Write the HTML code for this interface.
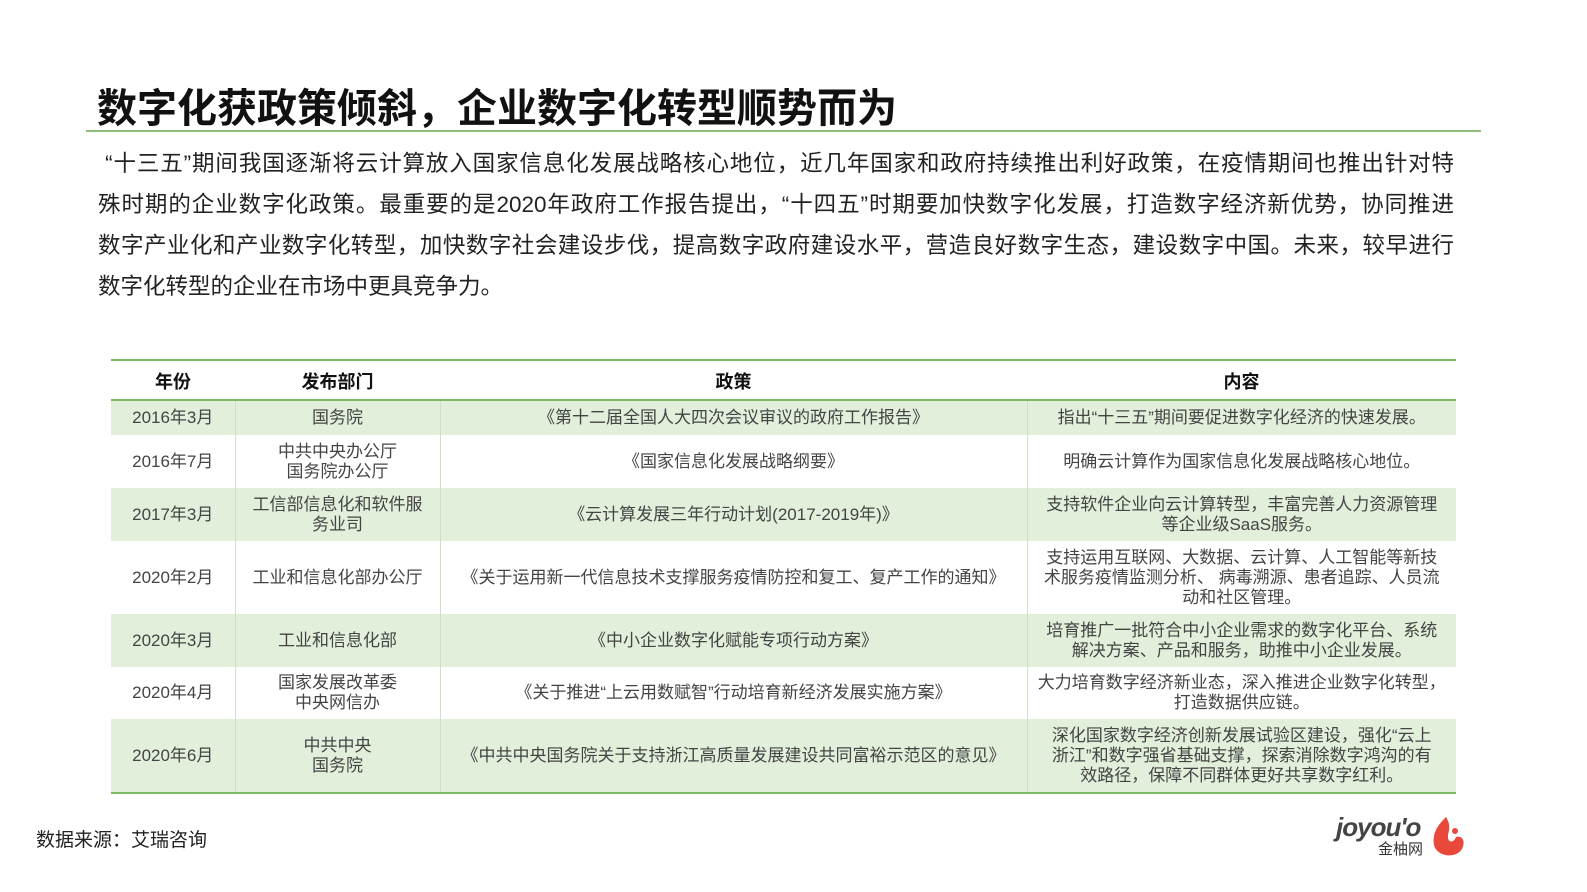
<!DOCTYPE html>
<html><head><meta charset="utf-8"><style>
body{margin:0;width:1587px;height:892px;background:#fff;position:relative;overflow:hidden;font-family:"Liberation Sans","Noto Sans CJK SC",sans-serif;}
.t{position:absolute;left:97px;top:76px;font-size:40px;font-weight:bold;color:#111;white-space:nowrap}
.hl{position:absolute;left:86px;top:130px;width:1395px;height:2px;background:#8cc07a}
.p{position:absolute;left:98px;top:143px;width:1356px;font-size:22.5px;line-height:41px;color:#222;}
.p div{text-align:justify;text-align-last:justify;white-space:nowrap}
.p div.l{text-align-last:left}
table{position:absolute;left:111px;top:359px;width:1345px;border-collapse:collapse;font-size:17px;color:#444;text-align:center}
th{font-weight:bold;color:#111;font-size:18px;height:34px;padding-top:3px;border-top:2px solid #7fb862;border-bottom:2px solid #7fb862}
td{line-height:20px;padding:0 8px;border-left:1px solid #cfe0c4;white-space:nowrap}
td:first-child{border-left:none}
td:nth-child(4){padding:0 8px}
tr.g td{background:#e2efda}
tr:last-child td{border-bottom:2px solid #7fb862}
.src{position:absolute;left:36px;top:825px;font-size:19px;color:#222}
</style></head><body>
<div class="t">数字化获政策倾斜，企业数字化转型顺势而为</div>
<div class="hl"></div>
<div class="p">
<div>&nbsp;“十三五”期间我国逐渐将云计算放入国家信息化发展战略核心地位，近几年国家和政府持续推出利好政策，在疫情期间也推出针对特</div>
<div>殊时期的企业数字化政策。最重要的是2020年政府工作报告提出，“十四五”时期要加快数字化发展，打造数字经济新优势，协同推进</div>
<div>数字产业化和产业数字化转型，加快数字社会建设步伐，提高数字政府建设水平，营造良好数字生态，建设数字中国。未来，较早进行</div>
<div class="l">数字化转型的企业在市场中更具竞争力。</div>
</div>
<table>
<colgroup><col style="width:124px"><col style="width:205px"><col style="width:587px"><col style="width:429px"></colgroup>
<tr><th>年份</th><th>发布部门</th><th>政策</th><th>内容</th></tr>
<tr class="g" style="height:35px"><td>2016年3月</td><td>国务院</td><td>《第十二届全国人大四次会议审议的政府工作报告》</td><td>指出“十三五”期间要促进数字化经济的快速发展。</td></tr>
<tr style="height:53px"><td>2016年7月</td><td>中共中央办公厅<br>国务院办公厅</td><td>《国家信息化发展战略纲要》</td><td>明确云计算作为国家信息化发展战略核心地位。</td></tr>
<tr class="g" style="height:53px"><td>2017年3月</td><td>工信部信息化和软件服<br>务业司</td><td>《云计算发展三年行动计划(2017-2019年)》</td><td>支持软件企业向云计算转型，丰富完善人力资源管理<br>等企业级SaaS服务。</td></tr>
<tr style="height:73px"><td>2020年2月</td><td>工业和信息化部办公厅</td><td>《关于运用新一代信息技术支撑服务疫情防控和复工、复产工作的通知》</td><td>支持运用互联网、大数据、云计算、人工智能等新技<br>术服务疫情监测分析、 病毒溯源、患者追踪、人员流<br>动和社区管理。</td></tr>
<tr class="g" style="height:53px"><td>2020年3月</td><td>工业和信息化部</td><td>《中小企业数字化赋能专项行动方案》</td><td>培育推广一批符合中小企业需求的数字化平台、系统<br>解决方案、产品和服务，助推中小企业发展。</td></tr>
<tr style="height:52px"><td>2020年4月</td><td>国家发展改革委<br>中央网信办</td><td>《关于推进“上云用数赋智”行动培育新经济发展实施方案》</td><td>大力培育数字经济新业态，深入推进企业数字化转型，<br>打造数据供应链。</td></tr>
<tr class="g" style="height:74px"><td>2020年6月</td><td>中共中央<br>国务院</td><td>《中共中央国务院关于支持浙江高质量发展建设共同富裕示范区的意见》</td><td>深化国家数字经济创新发展试验区建设，强化“云上<br>浙江”和数字强省基础支撑，探索消除数字鸿沟的有<br>效路径，保障不同群体更好共享数字红利。</td></tr>
</table>
<div class="src">数据来源：艾瑞咨询</div>
<div style="position:absolute;left:1336px;top:812px;font-size:26px;font-style:italic;font-weight:bold;color:#444;letter-spacing:-1px">joyou'o</div>
<div style="position:absolute;left:1378px;top:838px;font-size:15px;color:#333">金柚网</div>
<svg style="position:absolute;left:1428px;top:815px" width="40" height="44" viewBox="0 0 40 44"><path d="M18 2 C10 10 4 18 6 30 C9 42 28 44 34 34 C38 26 34 20 28 22 C26 28 20 28 20 22 C20 16 24 12 18 2Z" fill="#e8493a"/><circle cx="27" cy="16" r="3" fill="#e8493a"/></svg>
</body></html>
